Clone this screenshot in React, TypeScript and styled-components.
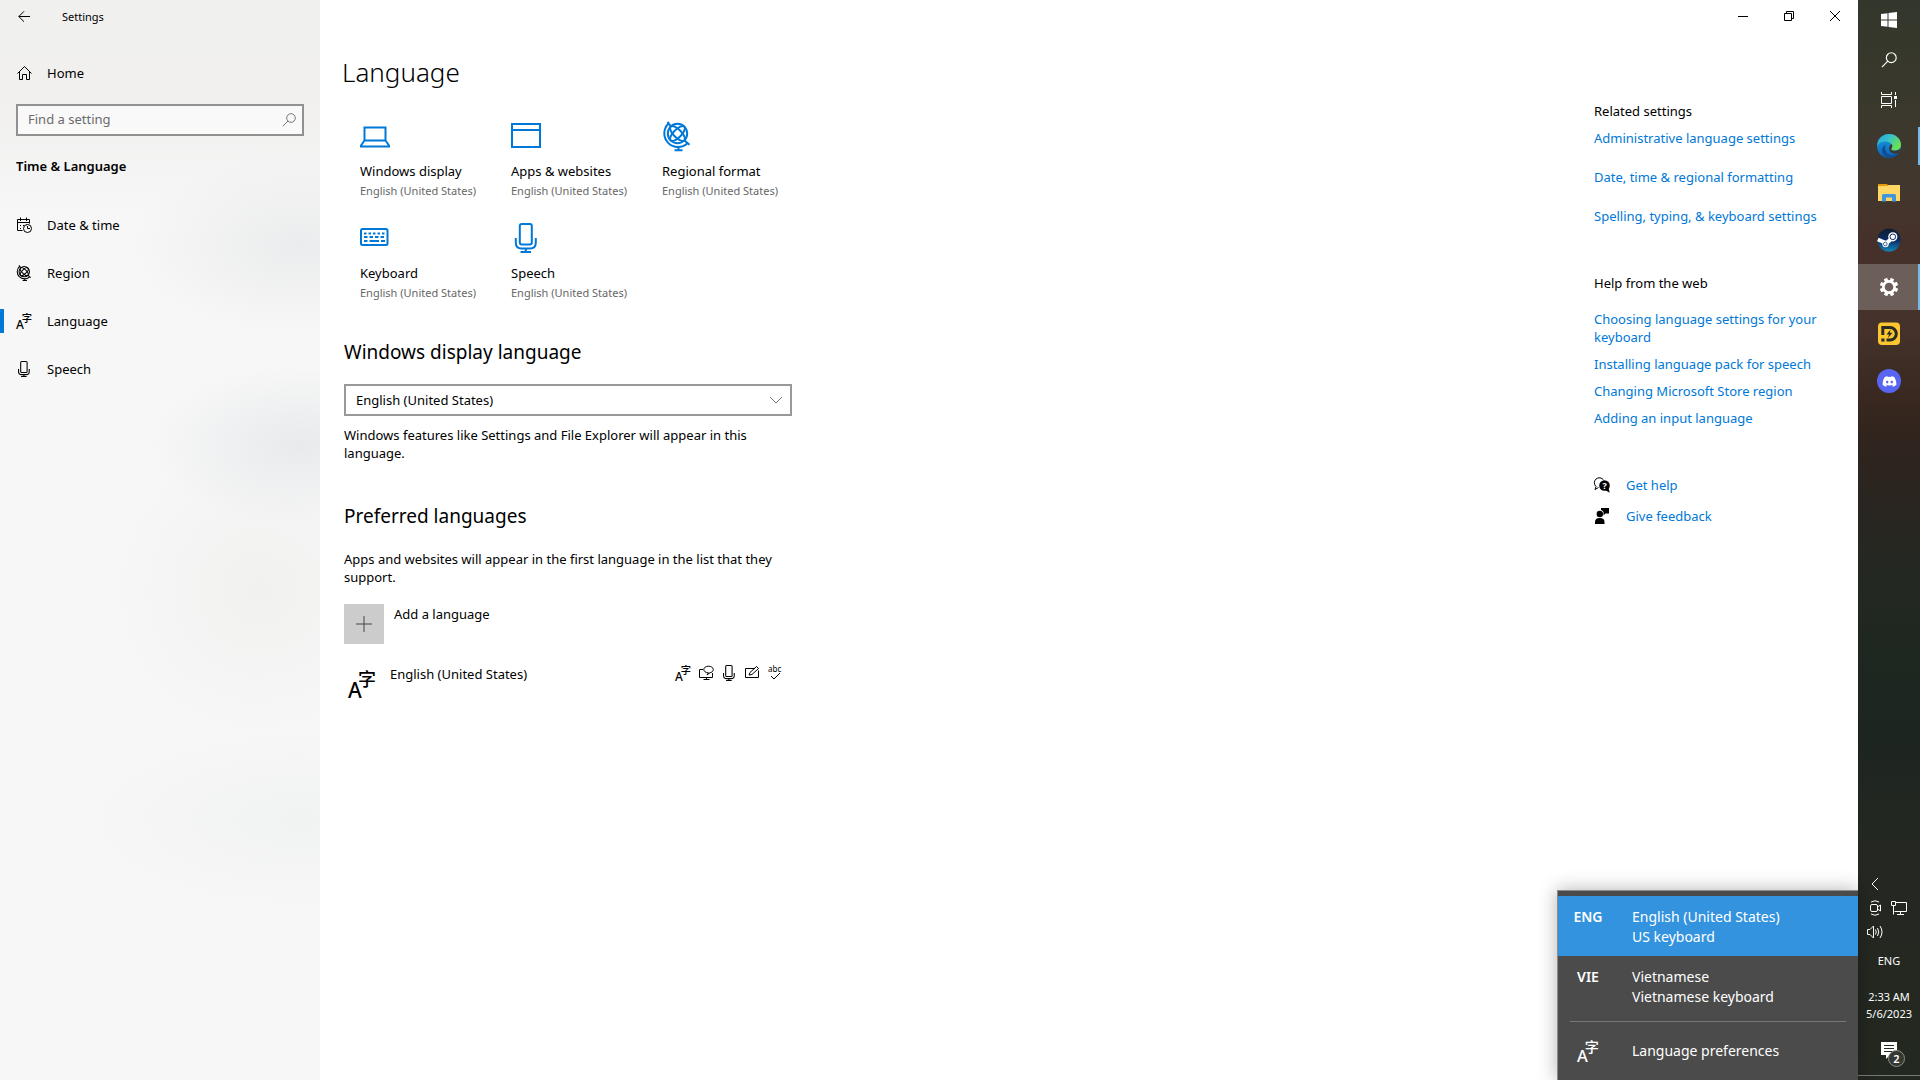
import React from "react";
import styled, { createGlobalStyle, css } from "styled-components";
import { FaDiscord } from "react-icons/fa";

const accent = "#0078d7";

const GlobalStyle = createGlobalStyle`
  * { box-sizing: border-box; }
  body {
    margin: 0;
    background: #fff;
    color: #000;
    font-family: "Noto Sans", "Open Sans", "Noto Sans CJK SC", sans-serif;
    font-size: 13px;
    line-height: 18px;
  }
  h1, h2, h3, p, ul { margin: 0; padding: 0; }
  ul { list-style: none; }
  button, input, select { font: inherit; color: inherit; }
  button { border: 0; padding: 0; background: none; }
  svg { display: block; flex: none; overflow: visible; }
`;

/* ---------- layout ---------- */

const Desktop = styled.div`
  display: flex;
  min-height: 100vh;
`;

const Sidebar = styled.aside`
  width: 320px;
  flex: none;
  background:
    radial-gradient(ellipse 170px 90px at 300px 245px, #ebeced 0%, rgba(235, 236, 237, 0) 100%),
    radial-gradient(ellipse 150px 80px at 300px 445px, #e8eaec 0%, rgba(232, 234, 236, 0) 100%),
    radial-gradient(ellipse 150px 150px at 260px 590px, #f1f1f0 0%, rgba(241, 241, 240, 0) 100%),
    radial-gradient(ellipse 220px 90px at 300px 820px, #f1f2f2 0%, rgba(241, 242, 242, 0) 100%),
    linear-gradient(#f0f0ef 0, #f1f0ef 100px, #f7f7f7 220px, #f7f7f7 100%);
`;

const Main = styled.main`
  position: relative;
  flex: 1;
  min-width: 0;
  background: #fff;
`;

/* ---------- sidebar ---------- */

const SideTitle = styled.div`
  display: flex;
  align-items: center;
  gap: 32px;
  height: 33px;
  padding-left: 18px;
  font-size: 11px;
`;

const IconButton = styled.button`
  display: grid;
  place-items: center;
`;

const NavLink = styled.a<{ $active?: boolean }>`
  display: flex;
  align-items: center;
  gap: 15px;
  height: 48px;
  padding-left: 12px;
  border-left: 4px solid transparent;
  color: #000;
  text-decoration: none;
  ${(p) =>
    p.$active &&
    css`
      border-image: linear-gradient(transparent 12px, ${accent} 12px, ${accent} 36px, transparent 36px) 0 0 0 4;
    `}
`;

const HomeWrap = styled.div`
  padding-top: 16px;
`;

const SearchBox = styled.label`
  display: flex;
  align-items: center;
  height: 32px;
  margin: 7px 16px 0;
  padding: 0 6px 0 10px;
  border: 2px solid #919191;
  background: rgba(255, 255, 255, 0.6);
`;

const SearchInput = styled.input`
  flex: 1;
  min-width: 0;
  padding: 0 0 2px;
  border: 0;
  outline: 0;
  background: none;
  &::placeholder { color: #6b6b6b; opacity: 1; }
`;

const SideHeading = styled.h2`
  margin: 20px 16px 25px;
  font-size: 13px;
  line-height: 20px;
  font-weight: 600;
`;

/* ---------- content ---------- */

const WindowButtons = styled.div`
  display: flex;
  justify-content: flex-end;
  height: 32px;
`;

const WindowButton = styled(IconButton)`
  width: 46px;
`;

const Body = styled.div`
  display: flex;
  justify-content: space-between;
  padding: 22px 36px 0 24px;
`;

const Column = styled.div`
  width: 448px;
`;

const PageTitle = styled.h1`
  margin-left: -2px;
  font-size: 26px;
  line-height: 36px;
  font-weight: 300;
`;

const Tiles = styled.ul`
  display: grid;
  grid-template-columns: repeat(3, 151px);
  row-gap: 24px;
  margin: 31px 0 0 16px;
`;

const Tile = styled.li`
  display: flex;
  flex-direction: column;
  color: #000;
  white-space: nowrap;
  svg { color: ${accent}; margin-bottom: 11px; }
`;

const TileNote = styled.span`
  margin-top: 3px;
  font-size: 11px;
  line-height: 16px;
  color: #666;
`;

const SectionTitle = styled.h2<{ $gap: number }>`
  margin-top: ${(p) => p.$gap}px;
  font-size: 19px;
  line-height: 26px;
  font-weight: 400;
`;

const SelectWrap = styled.div`
  display: grid;
  align-items: center;
  height: 32px;
  margin-top: 19px;
  > * { grid-area: 1 / 1; }
  svg { justify-self: end; margin-right: 9px; pointer-events: none; }
`;

const Select = styled.select`
  width: 100%;
  height: 32px;
  padding: 0 10px;
  border: 2px solid #999;
  border-radius: 0;
  background: #fff;
  appearance: none;
`;

const Paragraph = styled.p<{ $gap: number }>`
  margin-top: ${(p) => p.$gap}px;
`;

const AddButton = styled.button`
  display: flex;
  gap: 10px;
  margin-top: 18px;
`;

const AddSquare = styled.span`
  display: grid;
  place-items: center;
  width: 40px;
  height: 40px;
  background: #ccc;
`;

const AddLabel = styled.span`
  padding-top: 1px;
`;

const LanguageRow = styled.div`
  display: flex;
  align-items: flex-start;
  margin-top: 21px;
  padding: 0 9px 0 4px;
`;

const RowIcon = styled.span`
  padding-top: 5px;
  margin-right: 14px;
`;

const Features = styled.div`
  display: flex;
  gap: 7px;
  margin-left: auto;
`;

/* ---------- right column ---------- */

const Related = styled.div`
  width: 228px;
  padding-top: 48px;
`;

const SideTopic = styled.h3<{ $gap?: number }>`
  margin-top: ${(p) => p.$gap ?? 0}px;
  font-size: 13px;
  font-weight: 400;
`;

const LinkList = styled.ul<{ $gap: number; $top: number }>`
  display: grid;
  gap: ${(p) => p.$gap}px;
  margin-top: ${(p) => p.$top}px;
`;

const Link = styled.a`
  display: flex;
  align-items: center;
  gap: 16px;
  color: ${accent};
  text-decoration: none;
  svg { color: #000; }
`;

/* ---------- language flyout ---------- */

const Flyout = styled.div`
  position: absolute;
  right: 0;
  bottom: 0;
  width: 301px;
  padding: 5px 0 1px;
  border: solid #8c8c8c;
  border-width: 1px 0 0 1px;
  background: #4b4b4b;
  box-shadow: 0 0 18px rgba(0, 0, 0, 0.3);
  color: #fff;
  font-size: 14px;
  line-height: 20px;
`;

const FlyoutItem = styled.button<{ $selected?: boolean }>`
  display: grid;
  grid-template-columns: 60px 1fr;
  column-gap: 14px;
  width: 100%;
  height: 60px;
  padding-top: 1px;
  align-items: center;
  text-align: left;
  background: ${(p) => (p.$selected ? "#3393df" : "transparent")};
`;

const Code = styled.span`
  align-self: start;
  padding-top: 10px;
  font-weight: 600;
  text-align: center;
`;

const Preferences = styled(FlyoutItem)`
  justify-items: start;
  height: 57px;
  padding: 0;
  svg { justify-self: center; }
`;

const Divider = styled.hr`
  height: 1px;
  margin: 5px 12px 0;
  border: 0;
  background: #777;
`;

/* ---------- taskbar ---------- */

const Taskbar = styled.nav`
  display: flex;
  flex-direction: column;
  flex: none;
  width: 62px;
  color: #fff;
  background: linear-gradient(
    #33372b 0, #3a382d 100px, #42372e 190px, #46312a 240px, #44322b 330px, #38281f 400px,
    #30241e 440px, #2a2520 500px, #252822 560px, #1f2721 650px, #1d2520 740px, #252822 860px, #232820 100%
  );
  font-size: 11px;
  line-height: 17px;
`;

const SystemButton = styled(IconButton)`
  height: 40px;
`;

const Apps = styled.div`
  display: grid;
  gap: 1px;
  margin-top: 3px;
`;

const AppButton = styled(IconButton)<{ $state?: "running" | "active" }>`
  height: 46px;
  background: ${(p) =>
    p.$state === "active"
      ? "linear-gradient(#76b9ed, #76b9ed) right / 2px 100% no-repeat, #6c5e58"
      : p.$state === "running"
        ? "linear-gradient(#76b9ed, #76b9ed) right / 2px 38px no-repeat"
        : "none"};
`;

const Tray = styled.div`
  display: grid;
  grid-template-columns: 24px 24px;
  grid-auto-rows: 24px;
  margin-top: auto;
  padding-left: 5px;
`;

const TrayButton = styled(IconButton)<{ $wide?: boolean }>`
  grid-column: ${(p) => (p.$wide ? "1 / 2" : "auto")};
`;

const TextButton = styled.button<{ $height: number }>`
  height: ${(p) => p.$height}px;
  text-align: center;
`;

const Notifications = styled(IconButton)`
  position: relative;
  height: 41px;
  padding-bottom: 8px;
`;

const Badge = styled.span`
  position: absolute;
  right: 15px;
  bottom: 8px;
  width: 17px;
  height: 17px;
  border: 1px solid #8b8e8a;
  border-radius: 50%;
  background: #343833;
  line-height: 15px;
  text-align: center;
  font-weight: 600;
`;

const ShowDesktop = styled.button`
  height: 5px;
  border-top: 1px solid #777b75;
`;

/* ---------- icons ---------- */

type IconProps = { size?: number; sw?: number; children?: React.ReactNode; box?: number; color?: string };

const Line = ({ size = 16, sw = 1, box = size, color = "currentColor", children }: IconProps) => (
  <svg width={size} height={size} viewBox={`0 0 ${box} ${box}`} fill="none" stroke={color} strokeWidth={sw} aria-hidden="true">
    {children}
  </svg>
);

const BackIcon = () => (
  <Line size={12}><path d="M12 5.500H.8M6 .3.8 5.500 6 10.700" /></Line>
);

const HomeIcon = () => (
  <Line><path d="M1.500 8.500 8.500 1.500 15.500 8.500M3.500 6.500V14.500H6.500V9.500H10.500V14.500H13.500V6.500" /></Line>
);

const SearchIcon = ({ size = 14, sw = 1, color }: IconProps) => (
  <Line size={size} box={14} sw={sw} color={color}>
    <circle cx="9" cy="5" r="4.300" /><path d="M6 8 .8 13.200" />
  </Line>
);

const CalendarIcon = () => (
  <Line>
    <path d="M6.500 13.500H1.500V2.500H13.500V6.500M1.500 5.500H13.500M4.500 .500V4M10.500 .500V4" />
    <path d="M4 8.500H5M7 8.500H8M4 11.500H5M10 7.500H10.500" />
    <circle cx="11.500" cy="11.500" r="4" /><path d="M11.500 9V11.500H14" />
  </Line>
);

const GlobeIcon = ({ size = 16, sw = 1 }: IconProps) => (
  <Line size={size} box={30} sw={sw}>
    <circle cx="15.500" cy="12.500" r="9.700" />
    <ellipse cx="15.500" cy="12.500" rx="9.700" ry="4" transform="rotate(45 15.500 12.500)" />
    <ellipse cx="15.500" cy="12.500" rx="9.700" ry="4" transform="rotate(-45 15.500 12.500)" />
    <path d="M5.500 .800 9 5.500M22.500 19.500 27.500 23.800M6.500 2.500A13.500 13.500 0 0 0 25.500 22.200M16.500 26V29M12.500 29.200H20.500" />
  </Line>
);

const LanguageIcon = ({ size = 16 }: IconProps) => (
  <svg width={size} height={size} viewBox="0 0 28 28" fill="currentColor" aria-hidden="true">
    <text x="0" y="28" fontFamily="Noto Sans" fontSize="21" fontWeight="500">A</text>
    <text x="10" y="15.500" fontFamily="Noto Sans CJK SC" fontSize="18" fontWeight="500">字</text>
  </svg>
);

const MicIcon = ({ size = 16, sw = 1 }: IconProps) => (
  <Line size={size} box={30} sw={sw}>
    <rect x="8.800" y="1" width="12" height="20.500" rx="2" />
    <path d="M4.800 15V19.500Q4.800 25.500 10.500 25.500H19Q24.800 25.500 24.800 19.500V15M14.800 25.500V29M9.500 29H20" />
  </Line>
);

const LaptopIcon = () => (
  <Line size={30} sw={2}>
    <path d="M4.500 19.500V6.500H25.500V19.500ZM4.500 19.500 1 24.500V25.500H29V24.500L25.500 19.500" />
  </Line>
);

const WindowIcon = () => (
  <Line size={30} sw={2}><path d="M1 3H29V26H1ZM1 9H29" /></Line>
);

const KeyboardIcon = () => (
  <Line size={30} sw={2}>
    <rect x="1" y="6" width="26.500" height="16" rx="1.500" />
    <path d="M4 10.500H25" strokeDasharray="2.500 2" />
    <path d="M4 14H25" strokeDasharray="3.500 2" />
    <path d="M4 18H7.500M9.500 18H19M21 18H25" />
  </Line>
);

const ChevronDown = () => (
  <Line size={14} color="#777"><path d="M1 4 7 10 13 4" /></Line>
);

const DisplayBubble = () => (
  <Line>
    <path d="M5 4.500H1.500V12.500H14.500V8M5.500 14.500H11.500M8.500 12.500V14.500" />
    <path d="M10.500 7.800C7.500 8 5.800 6 5.800 4.500 5.800 2.500 8 1.200 10.500 1.200S15.300 2.500 15.300 4.500 13.500 7.500 12 7.700L9 10Z" fill="#fff" />
  </Line>
);

const Handwriting = () => (
  <Line>
    <path d="M11 3.500H1.500V12.500H14.500V5.500M5 10 6 7.500 12.500 1.500 14.500 3.500 8 9.500Z" />
  </Line>
);

const SpellCheck = () => (
  <Line>
    <text x="1" y="7" fontFamily="Noto Sans" fontSize="8" fill="currentColor" stroke="none">abc</text>
    <path d="M4 11 7 14 13 8" />
  </Line>
);

const HelpIcon = () => (
  <svg width="16" height="16" viewBox="0 0 16 16" aria-hidden="true">
    <path d="M4.500 10.500 1 12.500 2 9.500A5 5 0 1 1 9.500 3" fill="none" stroke="currentColor" />
    <circle cx="10.500" cy="8.500" r="5.300" fill="currentColor" />
    <path d="M11 13 15.800 15.800 14.500 11Z" fill="currentColor" />
    <text x="8.500" y="12" fontFamily="Noto Sans" fontSize="9" fontWeight="700" fill="#fff">?</text>
  </svg>
);

const FeedbackIcon = () => (
  <svg width="16" height="16" viewBox="0 0 16 16" fill="currentColor" aria-hidden="true">
    <circle cx="5.800" cy="6" r="3.200" /><path d="M1 16V14Q1 10 5.800 10T10.500 14V16Z" />
    <path d="M7 0H15V5.500H11.500L9.500 7.500V4Q9 2.500 7 2Z" />
  </svg>
);

const WindowsLogo = () => (
  <svg width="16" height="16" viewBox="0 0 16 16" fill="#fff" aria-hidden="true">
    <path d="M0 2 6.500 1.200V7.500H0ZM7.500 1 16 0V7.500H7.500ZM0 8.500H6.500V14.800L0 14ZM7.500 8.500H16V16L7.500 15Z" />
  </svg>
);

const TaskView = () => (
  <Line>
    <path d="M.500 0V2.500H10.500V0M.500 16V13.500H10.500V16M.500 4.500H10.500V11.500H.500ZM14.500 0V3M14.500 8V15" />
    <rect x="13" y="4" width="3" height="3" fill="#fff" stroke="none" />
  </Line>
);

const EdgeLogo = () => (
  <svg width="24" height="24" viewBox="0 0 24 24" aria-hidden="true">
    <defs>
      <linearGradient id="edgeTop" x1="0" y1="0" x2="1" y2=".5">
        <stop offset="0" stopColor="#2aa5e0" /><stop offset=".5" stopColor="#35c1c9" /><stop offset="1" stopColor="#6be052" />
      </linearGradient>
      <linearGradient id="edgeLeft" x1="0" y1="0" x2="0" y2="1">
        <stop offset="0" stopColor="#1b9de2" /><stop offset="1" stopColor="#0c62b8" />
      </linearGradient>
    </defs>
    <circle cx="12" cy="12" r="12" fill="url(#edgeLeft)" />
    <path d="M.500 9C2 3.500 6.500 0 12 0 18.500 0 24 4.800 24 10.800 24 14.500 21 16.500 17.800 16.500 15 16.500 13.500 15.500 14.500 14 16 11.500 14 8 9.500 7.500 5 7 1.500 9 .300 12Z" fill="url(#edgeTop)" />
    <path d="M9 10.500C6.500 14.500 9 20.500 14.500 21 18 21.300 20.500 19.500 22 18.500 20 22 16 24 12 24 6.500 23.500 4 18 5.500 14Q6.500 11.500 9 10.500Z" fill="#104d94" />
    <path d="M14.300 9.800C16 11.500 15.200 13.500 14.400 14.500 13.500 16 15 16.800 17.500 16.800 20 16.800 22 16 23.300 14.500L22.500 18.500C19 20.500 14.500 20 12.800 17 11.300 14.500 12.300 12 14.300 9.800Z" fill="#3d382f" />
  </svg>
);

const FolderIcon = () => (
  <svg width="22" height="20" viewBox="0 0 22 20" aria-hidden="true">
    <path d="M0 1H9L10.500 3H0Z" fill="#e39a0b" /><path d="M0 3H9L10.500 2H22V18H0Z" fill="#ffd766" />
    <path d="M4 18.500V12.500Q4 11 5.500 11H16.500Q18 11 18 12.500V18.500H14V14.500H8V18.500Z" fill="#3f96dc" />
  </svg>
);

const SteamIcon = () => (
  <svg width="24" height="24" viewBox="0 0 24 24" aria-hidden="true">
    <defs>
      <linearGradient id="steam" x1="0" y1="0" x2="0" y2="1">
        <stop offset="0" stopColor="#111d2e" /><stop offset=".5" stopColor="#0c2b63" /><stop offset="1" stopColor="#1387b8" />
      </linearGradient>
    </defs>
    <circle cx="12" cy="12" r="11.500" fill="url(#steam)" />
    <path d="M.800 11.500 8 14.500M8.500 16 13.500 11.500" stroke="#fff" strokeWidth="4" />
    <circle cx="8.500" cy="16" r="3.200" fill="#fff" />
    <circle cx="8.300" cy="16" r="1.800" fill="#fff" stroke="#0f4a80" strokeWidth=".800" />
    <circle cx="15.800" cy="8.800" r="4.600" fill="#fff" />
    <circle cx="15.800" cy="8.800" r="2.800" fill="#fff" stroke="#0c2b63" />
  </svg>
);

const DiscordDisc = styled.span`
  display: grid;
  place-items: center;
  width: 24px;
  height: 24px;
  border-radius: 50%;
  background: #5865f2;
`;

const GearIcon = () => (
  <svg width="20" height="20" viewBox="-10 -10 20 20" aria-hidden="true">
    <circle r="5.600" fill="none" stroke="#fff" strokeWidth="2.600" />
    {[0, 45, 90, 135, 180, 225, 270, 315].map((a) => (
      <rect key={a} x="-1.800" y="-9.200" width="3.600" height="3.400" fill="#fff" transform={`rotate(${a + 22})`} />
    ))}
  </svg>
);

const PlayerIcon = () => (
  <svg width="24" height="24" viewBox="0 0 24 24" aria-hidden="true">
    <rect x="1" y=".500" width="22" height="22.500" rx="4" fill="#fbc62f" />
    <path d="M5.800 13V5.500H13A6.300 6.300 0 0 1 13 18.100H9.500" fill="none" stroke="#2b2b26" strokeWidth="3" />
    <path d="M4.300 16.500H7.500V19.600H4.300Z" fill="#2b2b26" />
    <path d="M13.500 7.500 9.500 12.500H12L11 16 15.500 10.800H12.800Z" fill="#2b2b26" />
  </svg>
);

const NotificationIcon = () => (
  <svg width="16" height="17" viewBox="0 0 16 17" aria-hidden="true">
    <path d="M0 0H16V13H9L5 17V13H0Z" fill="#fff" />
    <path d="M3 3.500H13M3 6.500H13M3 9.500H13" stroke="#232820" />
  </svg>
);

/* ---------- page ---------- */

const english = "English (United States)";

const navItems = [
  { label: "Date & time", icon: <CalendarIcon /> },
  { label: "Region", icon: <GlobeIcon sw={2} /> },
  { label: "Language", icon: <LanguageIcon />, active: true },
  { label: "Speech", icon: <MicIcon sw={2} /> },
];

const tiles = [
  { label: "Windows display", icon: <LaptopIcon /> },
  { label: "Apps & websites", icon: <WindowIcon /> },
  { label: "Regional format", icon: <GlobeIcon size={30} sw={2} /> },
  { label: "Keyboard", icon: <KeyboardIcon /> },
  { label: "Speech", icon: <MicIcon size={30} sw={2} /> },
];

const relatedLinks = [
  "Administrative language settings",
  "Date, time & regional formatting",
  "Spelling, typing, & keyboard settings",
];

const webLinks = [
  "Choosing language settings for your keyboard",
  "Installing language pack for speech",
  "Changing Microsoft Store region",
  "Adding an input language",
];

export default function App() {
  return (
    <>
      <GlobalStyle />
      <Desktop>
        <Sidebar>
          <SideTitle>
            <IconButton aria-label="Back"><BackIcon /></IconButton>
            Settings
          </SideTitle>
          <HomeWrap>
            <NavLink href="#home"><HomeIcon />Home</NavLink>
          </HomeWrap>
          <SearchBox>
            <SearchInput type="text" placeholder="Find a setting" aria-label="Find a setting" />
            <SearchIcon color="#777" />
          </SearchBox>
          <SideHeading>Time &amp; Language</SideHeading>
          <nav>
            {navItems.map((n) => (
              <NavLink key={n.label} href="#" $active={n.active}>{n.icon}{n.label}</NavLink>
            ))}
          </nav>
        </Sidebar>

        <Main>
          <WindowButtons>
            <WindowButton aria-label="Minimize"><Line size={10}><path d="M0 5.500H10" /></Line></WindowButton>
            <WindowButton aria-label="Restore"><Line size={10}><path d="M.500 2.500H7.500V9.500H.500ZM2.500 2V.500H9.500V7.500H8" /></Line></WindowButton>
            <WindowButton aria-label="Close"><Line size={10}><path d="M0 0 10 10M10 0 0 10" /></Line></WindowButton>
          </WindowButtons>

          <Body>
            <Column>
              <PageTitle>Language</PageTitle>
              <Tiles>
                {tiles.map((t) => (
                  <Tile key={t.label}>
                    {t.icon}
                    {t.label}
                    <TileNote>{english}</TileNote>
                  </Tile>
                ))}
              </Tiles>

              <SectionTitle id="display-language" $gap={38}>Windows display language</SectionTitle>
              <SelectWrap>
                <Select aria-labelledby="display-language" defaultValue={english}>
                  <option>{english}</option>
                </Select>
                <ChevronDown />
              </SelectWrap>
              <Paragraph $gap={10}>
                Windows features like Settings and File Explorer will appear in this language.
              </Paragraph>

              <SectionTitle $gap={41}>Preferred languages</SectionTitle>
              <Paragraph $gap={21}>
                Apps and websites will appear in the first language in the list that they support.
              </Paragraph>
              <AddButton>
                <AddSquare><Line color="#444"><path d="M0 8H16M8 0V16" /></Line></AddSquare>
                <AddLabel>Add a language</AddLabel>
              </AddButton>
              <LanguageRow>
                <RowIcon><LanguageIcon size={28} /></RowIcon>
                {english}
                <Features>
                  <LanguageIcon />
                  <DisplayBubble />
                  <MicIcon sw={2} />
                  <Handwriting />
                  <SpellCheck />
                </Features>
              </LanguageRow>
            </Column>

            <Related>
              <SideTopic>Related settings</SideTopic>
              <LinkList $gap={21} $top={9}>
                {relatedLinks.map((l) => <li key={l}><Link href="#">{l}</Link></li>)}
              </LinkList>
              <SideTopic $gap={49}>Help from the web</SideTopic>
              <LinkList $gap={9} $top={18}>
                {webLinks.map((l) => <li key={l}><Link href="#">{l}</Link></li>)}
              </LinkList>
              <LinkList $gap={13} $top={49}>
                <li><Link href="#"><HelpIcon />Get help</Link></li>
                <li><Link href="#"><FeedbackIcon />Give feedback</Link></li>
              </LinkList>
            </Related>
          </Body>

          <Flyout>
            <FlyoutItem $selected>
              <Code>ENG</Code>
              <span>{english}<br />US keyboard</span>
            </FlyoutItem>
            <FlyoutItem>
              <Code>VIE</Code>
              <span>Vietnamese<br />Vietnamese keyboard</span>
            </FlyoutItem>
            <Divider />
            <Preferences>
              <LanguageIcon size={22} />
              Language preferences
            </Preferences>
          </Flyout>
        </Main>

        <Taskbar>
          <SystemButton aria-label="Start"><WindowsLogo /></SystemButton>
          <SystemButton aria-label="Search"><SearchIcon size={16} /></SystemButton>
          <SystemButton aria-label="Task view"><TaskView /></SystemButton>
          <Apps>
            <AppButton aria-label="Edge" $state="running"><EdgeLogo /></AppButton>
            <AppButton aria-label="File Explorer"><FolderIcon /></AppButton>
            <AppButton aria-label="Steam"><SteamIcon /></AppButton>
            <AppButton aria-label="Settings" $state="active"><GearIcon /></AppButton>
            <AppButton aria-label="Player"><PlayerIcon /></AppButton>
            <AppButton aria-label="Discord">
              <DiscordDisc><FaDiscord size={15} /></DiscordDisc>
            </AppButton>
          </Apps>

          <Tray>
            <TrayButton $wide aria-label="Show hidden icons"><Line size={12}><path d="M9 0 3 6 9 12" /></Line></TrayButton>
            <TrayButton $wide aria-label="Meet now">
              <Line><rect x="3.500" y="4.500" width="7" height="7" rx="1.500" /><path d="M10.500 7 13.500 5V11L10.500 9M4 2Q8-.500 12 2M4 14Q8 16.500 12 14" /></Line>
            </TrayButton>
            <TrayButton aria-label="Network">
              <Line><path d="M5 2.500H15.500V11.500H3.500M9.500 11.500V14.500M6 14.500H13M.500 1.500H4.500V5.500H.500ZM2.500 5.500V14.500" /></Line>
            </TrayButton>
            <TrayButton $wide aria-label="Volume">
              <Line><path d="M.500 5.500H3L6.500 2V14L3 10.500H.500ZM8.500 5.500Q10 8 8.500 10.500M10.500 4Q13 8 10.500 12M13 2Q17 8 13 14" /></Line>
            </TrayButton>
          </Tray>
          <TextButton $height={32}>ENG</TextButton>
          <TextButton $height={58}>2:33 AM<br />5/6/2023</TextButton>
          <Notifications aria-label="Notifications">
            <NotificationIcon />
            <Badge>2</Badge>
          </Notifications>
          <ShowDesktop aria-label="Show desktop" />
        </Taskbar>
      </Desktop>
    </>
  );
}
